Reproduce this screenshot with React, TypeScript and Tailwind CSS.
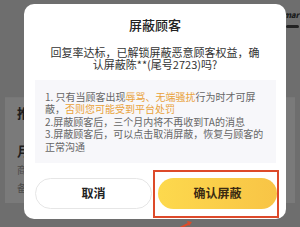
import React from "react";

const cjk = { fontFamily: '"Noto Sans CJK SC", "Noto Sans", sans-serif' };

function BackgroundPage() {
  return (
    <div className="flex h-full w-full flex-col bg-[#6e6e6e]">
      {/* top-right logo, mostly hidden by the dialog */}
      <div className="flex h-[97px] flex-col items-end pr-[1px] pt-[11px]">
        <span className="text-[8px] font-black italic leading-[8px] tracking-tight text-[#1c1c1c]">mar</span>
        <span className="mt-[6px] h-[3px] w-[13px] rounded-full bg-[#222]" />
      </div>
      <div className="mx-[5px] flex h-[106px] flex-col border-t border-[#777] bg-[#7a7a7a] pl-[12px] text-[#1e1e1e]">
        <span className="mt-[8px] text-[13px] font-bold leading-[14px]">推</span>
        <span className="mt-[24px] text-[13px] font-bold leading-[14px]">月</span>
        <span className="mt-[6px] text-[10px] leading-[12px] text-[#4a4a4a]">商</span>
        <span className="mt-[6px] text-[10px] leading-[12px] text-[#4a4a4a]">备</span>
      </div>
    </div>
  );
}

function ConfirmDialog() {
  return (
    <div className="absolute left-[24px] top-[4px] flex h-[215px] w-[262px] flex-col items-center rounded-[10px] bg-white">
      <h2 className="pt-[14px] text-[13px] font-medium leading-[14px] text-[#222]">屏蔽顾客</h2>
      <p className="mt-[13.5px] text-center text-[11px] leading-[12.5px] text-[#333]">
        回复率达标，已解锁屏蔽恶意顾客权益，确
        <br />
        认屏蔽陈**(尾号2723)吗?
      </p>

      <div className="mt-[9px] flex h-[83px] w-[241px] flex-col self-start ml-[11px] bg-[#f7f7fa] pl-[10px] pt-[11px] text-[10px] leading-[12.6px] text-[#666]">
        <span>
          1. 只有当顾客出现<span className="text-[#e9a23b]">辱骂、无端骚扰</span>行为时才可屏
        </span>
        <span>
          蔽，<span className="text-[#e9a23b]">否则您可能受到平台处罚</span>
        </span>
        <span>2.屏蔽顾客后，三个月内将不再收到TA的消息</span>
        <span>3.屏蔽顾客后，可以点击取消屏蔽，恢复与顾客的</span>
        <span>正常沟通</span>
      </div>

      <div className="mt-[15px] flex gap-[6px] self-start ml-[11px]">
        <button
          type="button"
          className="h-[31px] w-[117px] rounded-full border border-[#e6e6e6] bg-white text-[12px] font-bold text-[#222]"
        >
          取消
        </button>
        <button
          type="button"
          className="h-[31px] w-[119px] rounded-full bg-gradient-to-r from-[#fdd94d] to-[#f8c446] text-[12px] font-bold text-[#3b2b12]"
        >
          确认屏蔽
        </button>
      </div>

      {/* annotation frame around the confirm button */}
      <div className="absolute left-[129px] top-[166px] h-[48px] w-[126px] border-2 border-[#dd4a2a]" />
    </div>
  );
}

export default function App() {
  return (
    <div className="relative h-[227px] w-[300px] overflow-hidden" style={cjk}>
      <BackgroundPage />
      <ConfirmDialog />
      {/* annotation arrow tip */}
      <svg className="absolute left-[178px] top-[220px]" width="16" height="8" viewBox="0 0 16 8">
        <path d="M2 8 L12 3" stroke="#dd4a2a" strokeWidth="2" fill="none" />
        <path d="M9 1 L14 2 L11 6 Z" fill="#dd4a2a" />
      </svg>
    </div>
  );
}
